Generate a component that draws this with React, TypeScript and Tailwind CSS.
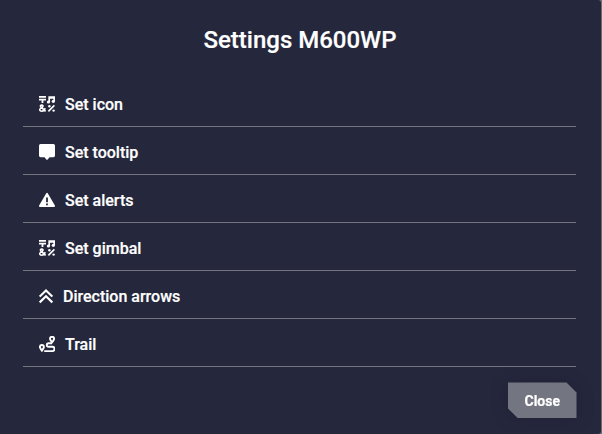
function SymbolsIcon() {
  return (
    <svg viewBox="0 0 16 16" className="size-4" fill="none" stroke="currentColor">
      <path d="M0 .9h7M0 3.7h7M3.5 3.7v3.4" strokeWidth="1.8" />
      <path d="M10.2 6V1.1h5v4.2M10.2 1.8h5" strokeWidth="1.7" />
      <circle cx="9.4" cy="6" r="1.6" fill="currentColor" stroke="none" />
      <circle cx="14.3" cy="5.3" r="1.6" fill="currentColor" stroke="none" />
      <path
        d="M6.6 15.3 1.9 10.9C.9 9.8 1.6 9.100 2.700 9.100s1.800.900.800 1.800L1.600 12.300C0 13.600.800 15.200 2.500 15.200c1.900 0 3.300-1.100 3.600-3"
        strokeWidth="1.6"
      />
      <path d="m9.4 15.4 6-6" strokeWidth="1.6" />
      <circle cx="10.4" cy="10.3" r="1.2" fill="currentColor" stroke="none" />
      <circle cx="14.6" cy="14.6" r="1.2" fill="currentColor" stroke="none" />
    </svg>
  );
}

function TooltipIcon() {
  return (
    <svg viewBox="0 0 16 16" className="size-4" fill="currentColor">
      <path d="M1.6 0h12.8A1.600 1.600 0 0 1 16 1.600v10a1.600 1.600 0 0 1-1.600 1.600h-3.900l-1.800 2.300a1 1 0 0 1-1.400 0l-1.800-2.300H1.600A1.600 1.600 0 0 1 0 11.600v-10A1.600 1.600 0 0 1 1.600 0Z" />
    </svg>
  );
}

function AlertIcon() {
  return (
    <svg viewBox="0 0 16 16" className="size-4" fill="currentColor" fillRule="evenodd">
      <path d="M7.1 1.4a1 1 0 0 1 1.8 0l7 12.2a1 1 0 0 1-.9 1.4H1a1 1 0 0 1-.9-1.4ZM7.1 5.5v4.7h1.8V5.5ZM7.1 11.4v1.8h1.8v-1.8Z" />
    </svg>
  );
}

function ArrowsIcon() {
  return (
    <svg viewBox="0 0 14 16" className="h-4 w-3.5" fill="none" stroke="currentColor" strokeWidth="2.1">
      <path d="m.7 8.6 6.3-6.2 6.3 6.2M.7 14.4 7 8.2l6.3 6.2" />
    </svg>
  );
}

function TrailIcon() {
  return (
    <svg viewBox="0 0 16 16" className="size-4" fill="none" stroke="currentColor" strokeWidth="1.9">
      <path d="M13 6.3c-1-1.4-2-2.5-2-3.5a2 2 0 0 1 4.1 0c0 1-1.1 2.1-2.1 3.5Z" />
      <path d="M13 7.2H9.6a1.8 1.8 0 0 0 0 3.6h3.7a2.100 2.100 0 0 1 0 4.300H5.200" />
      <path d="M2.9 14.6C1.9 13.2.9 12.1.9 11a2 2 0 0 1 4 0c0 1.1-1 2.200-2 3.600Z" />
    </svg>
  );
}

const items = [
  { label: "Set icon", icon: <SymbolsIcon /> },
  { label: "Set tooltip", icon: <TooltipIcon /> },
  { label: "Set alerts", icon: <AlertIcon /> },
  { label: "Set gimbal", icon: <SymbolsIcon /> },
  { label: "Direction arrows", icon: <ArrowsIcon /> },
  { label: "Trail", icon: <TrailIcon /> },
];

export default function App() {
  return (
    <div className="h-[434px] w-[602px] bg-[#6c6d78] pr-px">
      <div className="flex h-full flex-col rounded-r-[3px] bg-[#25273c] font-['Roboto',sans-serif] text-white [-webkit-text-stroke:0.2px_white]">
        {/* Title */}
        <h1 className="mt-6 pr-px text-center text-2xl font-medium">Settings M600WP</h1>

        {/* Options */}
        <ul className="mt-[23px] ml-[23px] w-[553px]">
          {items.map((item) => (
            <li
              key={item.label}
              className="flex h-12 items-center gap-2.5 border-b border-[#74757f] pt-[3px] pl-4 text-base font-medium"
            >
              {item.icon}
              <span className="pt-0.5">{item.label}</span>
            </li>
          ))}
        </ul>

        {/* Footer */}
        <div className="mt-[15.4px] flex justify-end pr-[24.5px] drop-shadow-[0_0_8px_rgba(20,22,50,0.35)]">
          <button className="h-9 w-[68.5px] bg-[#737580] pt-px text-sm font-bold [clip-path:polygon(0_0,58.5px_0,100%_10px,100%_100%,10px_100%,0_26px)]">
            Close
          </button>
        </div>
      </div>
    </div>
  );
}
